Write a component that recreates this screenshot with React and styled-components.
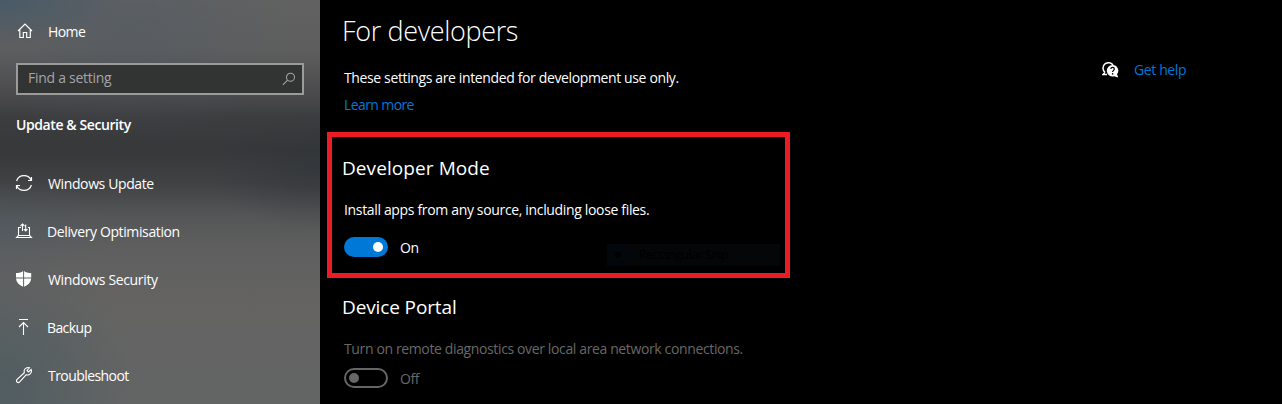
import React from "react";
import styled, { createGlobalStyle } from "styled-components";

const GlobalStyle = createGlobalStyle`
  * { box-sizing: border-box; }
  body {
    margin: 0;
    background: #000;
    color: #fff;
    font-family: "Open Sans", "Noto Sans", sans-serif;
    font-size: 14px;
    line-height: 20px;
    overflow: hidden;
  }
`;

const Window = styled.div`
  display: flex;
  width: 1282px;
  height: 404px;
  overflow: hidden;
  background: #000;
`;

const Sidebar = styled.nav`
  width: 320px;
  height: 404px;
  flex: none;
  overflow: hidden;
  padding: 8px 16px 0;
  background:
    radial-gradient(ellipse 120px 45px at 0 0, rgba(50, 84, 110, 0.5), transparent),
    radial-gradient(ellipse 160px 110px at 130px 30px, rgba(75, 90, 105, 0.35), transparent),
    radial-gradient(ellipse 130px 130px at 0 385px, rgba(68, 88, 96, 0.6), transparent),
    radial-gradient(ellipse 110px 50px at 0 228px, rgba(75, 90, 102, 0.4), transparent),
    radial-gradient(ellipse 110px 60px at 320px 170px, rgba(44, 50, 56, 0.5), transparent),
    linear-gradient(180deg, #616161 0, #5e5e5e 50px, #4d4d4f 88px, #3c3d3f 118px, #37383a 150px, #414244 184px, #545556 215px, #5f5f5f 250px, #646362 300px, #636565 404px);
`;

const NavRow = styled.div`
  display: flex;
  align-items: center;
  height: 48px;
`;

const IconSlot = styled.span`
  display: flex;
  width: 16px;
  height: 16px;
  margin: 0 ${(p) => p.$gap || 16}px 2px 0;
  svg { display: block; overflow: visible; }
`;

const Label = styled.span`
  white-space: nowrap;
  letter-spacing: ${(p) => p.$track || 0}px;
`;

const SearchBox = styled.div`
  display: flex;
  align-items: center;
  justify-content: space-between;
  height: 32px;
  margin-top: 7px;
  padding: 0 6px 2px 10px;
  border: 2px solid #9b9b9b;
  background: #323333;
  color: #a5a5a5;
  svg { margin-top: 2px; }
`;

const Category = styled.h2`
  margin: 20px 0 25px;
  font-size: 14px;
  line-height: 20px;
  font-weight: 600;
`;

const Content = styled.main`
  width: 480px;
  flex: none;
  padding: 13px 0 0 7px;
`;

const Title = styled.h1`
  margin: 0 0 19px 15px;
  font-size: 27px;
  line-height: 36px;
  font-weight: 350;
`;

const Text = styled.p`
  margin: 0 0 ${(p) => p.$below || 0}px 17px;
  color: ${(p) => (p.$muted ? "#686868" : "#fff")};
`;

const Link = styled.a`
  color: #0078d7;
`;

const Section = styled.section`
  width: 463px;
  height: ${(p) => (p.$highlighted ? "146px" : "auto")};
  margin-top: ${(p) => (p.$highlighted ? "17px" : "0")};
  padding-top: ${(p) => (p.$highlighted ? "17px" : "15px")};
  border: ${(p) => (p.$highlighted ? "5px solid #ed1c24" : "0")};
`;

const SectionTitle = styled.h3`
  margin: 0 0 ${(p) => p.$below}px ${(p) => p.$indent}px;
  font-size: 19px;
  line-height: 28px;
  font-weight: 400;
`;

const SectionText = styled(Text)`
  margin-left: ${(p) => p.$indent}px;
`;

const ToggleRow = styled.div`
  display: flex;
  align-items: center;
  height: 22px;
  margin-left: ${(p) => p.$indent}px;
  color: ${(p) => (p.$muted ? "#686868" : "#fff")};
`;

const Toggle = styled.span`
  display: flex;
  align-items: center;
  justify-content: ${(p) => (p.$on ? "flex-end" : "flex-start")};
  width: 44px;
  height: 20px;
  margin-right: 12px;
  margin-bottom: 2px;
  padding: 0 ${(p) => (p.$on ? 5 : 3)}px;
  border-radius: 10px;
  border: ${(p) => (p.$on ? "0" : "2px solid #666")};
  background: ${(p) => (p.$on ? "#0078d7" : "transparent")};
  &::after {
    content: "";
    width: 10px;
    height: 10px;
    border-radius: 50%;
    background: ${(p) => (p.$on ? "#fff" : "#666")};
  }
`;

const GhostMenuItem = styled.div`
  display: flex;
  align-items: center;
  width: 173px;
  height: 22px;
  margin: 14px 5px 0 auto;
  background: #050607;
  color: #000;
  font-size: 12px;
`;

const GhostGutter = styled.span`
  display: flex;
  align-items: center;
  justify-content: center;
  width: 22px;
  height: 22px;
  margin-right: 10px;
  background: #03070b;
  &::after {
    content: "";
    width: 6px;
    height: 6px;
    border-radius: 50%;
    background: #000;
  }
`;

const HelpPane = styled.aside`
  display: flex;
  align-items: flex-start;
  padding: 60px 0 0 302px;
  gap: 15px;
  svg { margin-top: 2px; }
`;

const Svg = ({ children, size = 16, ...rest }) => (
  <svg width={size} height={size} viewBox="0 0 16 16" fill="none" stroke="currentColor" strokeWidth="1.1" {...rest}>
    {children}
  </svg>
);

const HomeIcon = () => (
  <Svg strokeWidth="1.15">
    <path d="M2 8 9 1l7 7M3.8 6.5V14.5H7.3V9.5H10.7V14.5H14.3V6.5" />
  </Svg>
);
const SearchIcon = () => (
  <Svg size={14} strokeWidth="1.2">
    <circle cx="9.7" cy="6" r="4.6" />
    <path d="M6.4 9.3 1 14.7" />
  </Svg>
);
const SyncIcon = () => (
  <Svg strokeWidth="1.2">
    <path d="M.6 6C1.600 2.700 4.500.6 8 .6c3.300 0 6 1.800 7.100 4.700M15.500 2V5.500H12M15.400 10C14.400 13.300 11.500 15.400 8 15.400 4.700 15.400 2 13.600.9 10.700M.5 14V10.500H4" />
  </Svg>
);
const DeliveryIcon = () => (
  <Svg>
    <path d="M5 4.500H2.500V12.500H13.500V4.500H12M2.500 12.500.6 14.500H15.400L13.500 12.500M6.500 8V1M4.500 3 6.500 1 8.500 3M9.700 1.500V8M7.900 6.200 9.700 8 11.500 6.200" />
  </Svg>
);
const ShieldIcon = () => (
  <Svg stroke="none" fill="currentColor">
    <path d="M7.100 0V6.600H0V2C3 2 5.500 1.500 7.100 0ZM8.100 0V6.600H15.200V2C12.200 2 9.700 1.500 8.100 0ZM0 7.600H7.100V15.700C3 14 .4 11.500 0 7.600ZM8.100 7.600H15.200C14.800 11.500 12.200 14 8.100 15.700Z" />
  </Svg>
);
const BackupIcon = () => (
  <Svg>
    <path d="M3 .5H12M7.500 16V3.500M3 8 7.500 3.500 12 8" />
  </Svg>
);
const WrenchIcon = () => (
  <Svg>
    <path d="M13.500.8C11.500 0 8.700 1 8.200 3.300 8 4.200 8.100 4.900 8.300 5.700L1.100 12.300C.2 13.200.3 14.300 1 15 1.800 15.700 2.900 15.700 3.700 14.900L10.300 7.700C12.400 8.300 14.700 7.200 15.300 5.200 15.600 4.200 15.500 3.200 15.200 2.500L12.500 5 11 3.500Z" />
  </Svg>
);
const HelpIcon = () => (
  <svg width="17" height="16" viewBox="0 0 17 16">
    <path d="M3 10.500C.2 8 .4 3.800 3.300 1.700 6-.1 9.500.500 11 3M3 10.300 1 12.500H5" fill="none" stroke="#fff" strokeWidth="1.500" />
    <path d="M10.500 3a5.700 5.700 0 1 0 1.500 11.200L16.300 15.500 15 12.300A5.700 5.700 0 0 0 10.500 3Z" fill="#fff" />
    <path d="M8.900 7C8.900 4.900 12.300 5 12.300 7 12.300 8.300 10.600 8.400 10.600 10" fill="none" stroke="#000" strokeWidth="1.200" />
    <circle cx="10.600" cy="11.900" r=".8" />
  </svg>
);

const navItems = [
  { label: "Windows Update", Icon: SyncIcon, track: -0.38, gap: 16 },
  { label: "Delivery Optimisation", Icon: DeliveryIcon, track: -0.38, gap: 15 },
  { label: "Windows Security", Icon: ShieldIcon, track: -0.35, gap: 16 },
  { label: "Backup", Icon: BackupIcon, track: -0.6, gap: 15 },
  { label: "Troubleshoot", Icon: WrenchIcon, track: -0.56, gap: 16 },
];

export default function App() {
  return (
    <>
      <GlobalStyle />
      <Window>
        <Sidebar>
          <NavRow>
            <IconSlot><HomeIcon /></IconSlot>
            <Label $track={-0.6}>Home</Label>
          </NavRow>
          <SearchBox>
            <Label $track={-0.28}>Find a setting</Label>
            <SearchIcon />
          </SearchBox>
          <Category><Label $track={-0.41}>Update &amp; Security</Label></Category>
          {navItems.map(({ label, Icon, track, gap }) => (
            <NavRow key={label}>
              <IconSlot $gap={gap}><Icon /></IconSlot>
              <Label $track={track}>{label}</Label>
            </NavRow>
          ))}
        </Sidebar>
        <Content>
          <Title><Label $track={-0.35}>For developers</Label></Title>
          <Text $below={7}><Label $track={-0.37}>These settings are intended for development use only.</Label></Text>
          <Text><Link><Label $track={-0.6}>Learn more</Label></Link></Text>
          <Section $highlighted>
            <SectionTitle $indent={10} $below={18}><Label $track={0.08}>Developer Mode</Label></SectionTitle>
            <SectionText $indent={12} $below={17}><Label $track={-0.34}>Install apps from any source, including loose files.</Label></SectionText>
            <ToggleRow $indent={12}>
              <Toggle $on />
              <Label $track={-0.3}>On</Label>
              <GhostMenuItem><GhostGutter /><Label $track={-0.3}>Rectangular Snip</Label></GhostMenuItem>
            </ToggleRow>
          </Section>
          <Section>
            <SectionTitle $indent={15} $below={18}><Label $track={-0.12}>Device Portal</Label></SectionTitle>
            <SectionText $indent={17} $below={9} $muted><Label $track={-0.37}>Turn on remote diagnostics over local area network connections.</Label></SectionText>
            <ToggleRow $indent={17} $muted>
              <Toggle />
              <Label $track={-0.4}>Off</Label>
            </ToggleRow>
          </Section>
        </Content>
        <HelpPane>
          <HelpIcon />
          <Link><Label $track={-0.38}>Get help</Label></Link>
        </HelpPane>
      </Window>
    </>
  );
}
